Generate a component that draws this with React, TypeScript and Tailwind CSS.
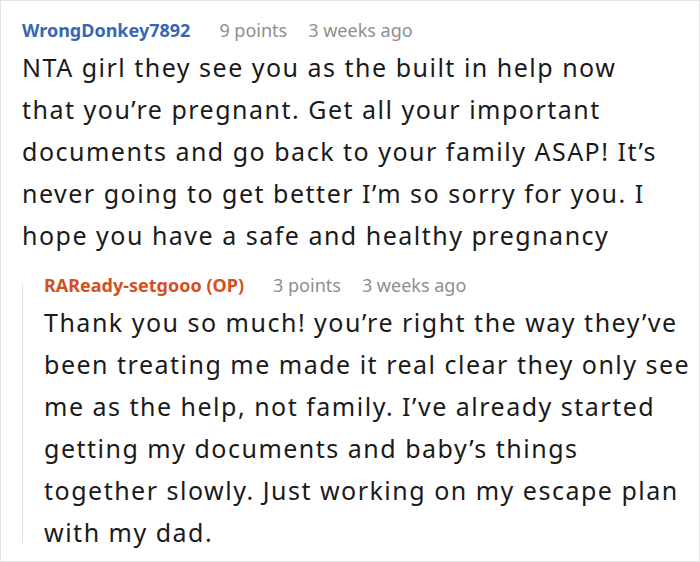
import React from "react";

type Meta = {
  author: string;
  points: string;
  time: string;
  op?: boolean;
};

const CommentHeader = ({ author, points, time, op }: Meta) => {
  return (
    <div className="flex items-baseline h-[24px] leading-[24px] text-[18px] mb-1 whitespace-nowrap">
      <span className={op ? "font-bold text-[#d4501e]" : "font-bold text-[#3767b3]"}>{author}</span>
      <span className="ml-[29px] text-[#8e8e8e]">{points}</span>
      <span className="ml-[21px] text-[#8e8e8e]">{time}</span>
    </div>
  );
};

const CommentBody = ({ lines }: { lines: string[] }) => {
  return (
    <p className="text-[25px] leading-[42px] tracking-[1.5px] whitespace-nowrap">
      {lines.map((line, i) => (
        <React.Fragment key={i}>
          {line}
          {i < lines.length - 1 && <br />}
        </React.Fragment>
      ))}
    </p>
  );
};

const App = () => {
  return (
    <div
      className="w-[700px] h-[562px] border border-[#e3e3e3] bg-white pt-[17px] pl-[21px] pb-2 overflow-hidden text-[#1a1a1a]"
      style={{ fontFamily: '"Noto Sans", "Open Sans", sans-serif' }}
    >
      <CommentHeader author="WrongDonkey7892" points="9 points" time="3 weeks ago" />
      <CommentBody
        lines={[
          "NTA girl they see you as the built in help now",
          "that you’re pregnant. Get all your important",
          "documents and go back to your family ASAP! It’s",
          "never going to get better I’m so sorry for you. I",
          "hope you have a safe and healthy pregnancy",
        ]}
      />

      <div className="flex mt-[17px]">
        <div className="w-px bg-[#e0e0e0] mt-[11px] mb-[10px] shrink-0" />
        <div className="ml-[21px]">
          <CommentHeader author="RAReady-setgooo (OP)" points="3 points" time="3 weeks ago" op />
          <CommentBody
            lines={[
              "Thank you so much! you’re right the way they’ve",
              "been treating me made it real clear they only see",
              "me as the help, not family. I’ve already started",
              "getting my documents and baby’s things",
              "together slowly. Just working on my escape plan",
              "with my dad.",
            ]}
          />
        </div>
      </div>
    </div>
  );
};

export default App;
